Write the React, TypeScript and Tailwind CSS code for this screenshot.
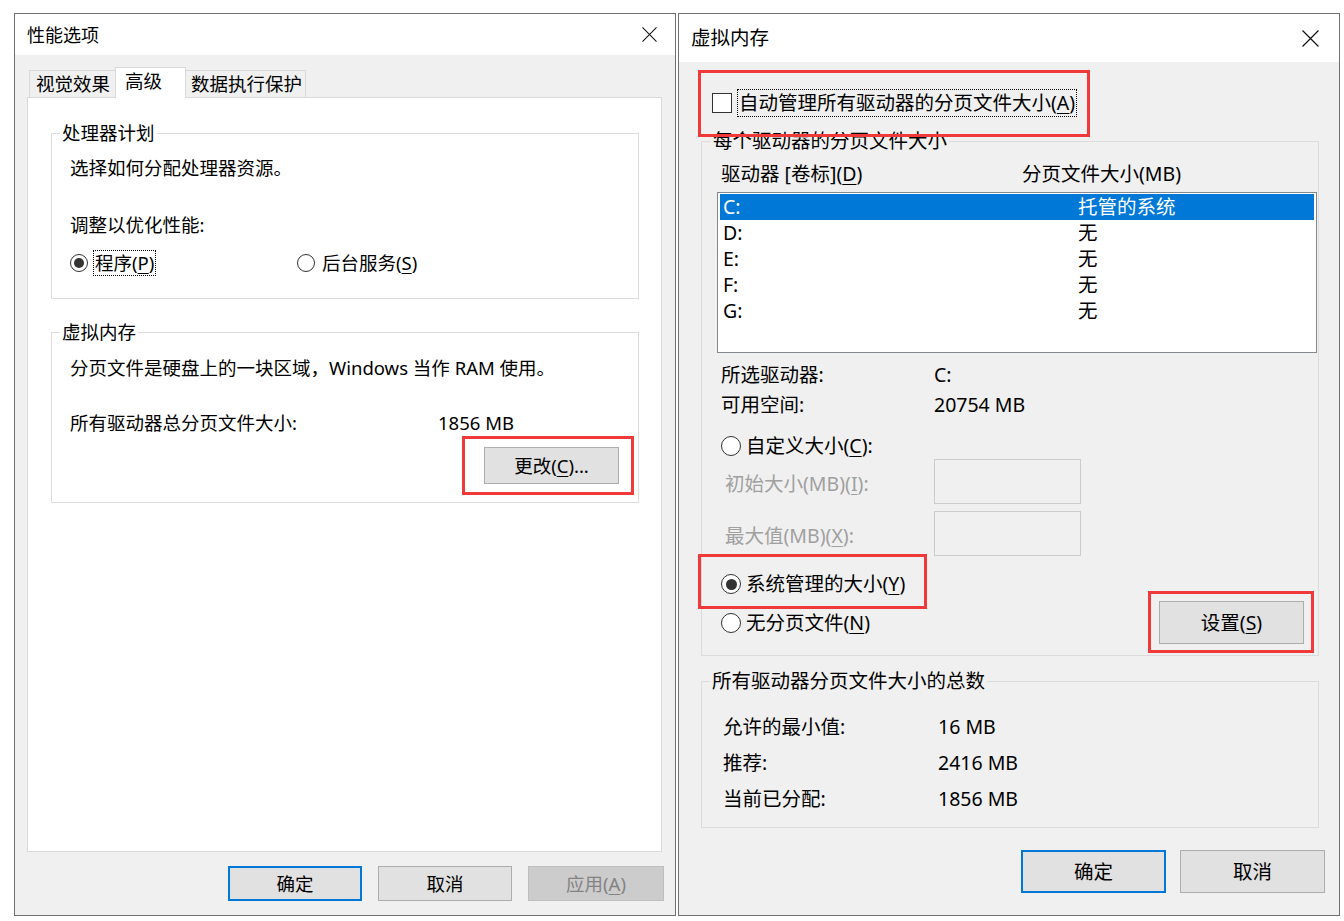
import type { ReactNode } from "react";

type Drive = { letter: string; size: string };

const DRIVES: Drive[] = [
  { letter: "C:", size: "托管的系统" },
  { letter: "D:", size: "无" },
  { letter: "E:", size: "无" },
  { letter: "F:", size: "无" },
  { letter: "G:", size: "无" },
];

// access-key letter, underlined like the Win32 mnemonic
function Mn({ children }: { children: ReactNode }) {
  return (
    <span className="underline decoration-[1px] underline-offset-[3px]">
      {children}
    </span>
  );
}

function CloseGlyph({ size }: { size: number }) {
  return (
    <svg
      width={size}
      height={size}
      viewBox="0 0 16 16"
      fill="none"
      stroke="#111111"
      strokeWidth={1.1}
    >
      <path d="M0.5 0.5L15.5 15.5M15.5 0.5L0.5 15.5" />
    </svg>
  );
}

function Radio({ checked = false, big = false }: { checked?: boolean; big?: boolean }) {
  return (
    <span
      className={`flex shrink-0 items-center justify-center rounded-full border border-[#333333] bg-white ${
        big ? "h-[20px] w-[20px]" : "h-[18px] w-[18px]"
      }`}
    >
      {checked && (
        <span
          className={`block rounded-full bg-[#333333] ${
            big ? "h-[11px] w-[11px]" : "h-[10px] w-[10px]"
          }`}
        />
      )}
    </span>
  );
}

// red annotation frame drawn over a control
function Highlight({ className }: { className: string }) {
  return (
    <span
      className={`pointer-events-none absolute z-10 border-[3px] border-[#f03a3a] ${className}`}
    />
  );
}

function WinButton({
  children,
  primary = false,
  disabled = false,
  className = "",
}: {
  children: ReactNode;
  primary?: boolean;
  disabled?: boolean;
  className?: string;
}) {
  const tone = disabled
    ? "border border-[#bfbfbf] bg-[#cccccc] text-[#838383]"
    : primary
      ? "border-2 border-[#0078d7] bg-[#e1e1e1]"
      : "border border-[#adadad] bg-[#e1e1e1]";
  return (
    <button type="button" className={`flex items-center justify-center ${tone} ${className}`}>
      {children}
    </button>
  );
}

function PerformanceOptions() {
  return (
    <section className="flex h-[903px] w-[662px] shrink-0 flex-col border border-[#707070] bg-[#f0f0f0] text-[18.5px] leading-[26px]">
      <header className="flex h-[41px] shrink-0 items-center justify-between bg-white pl-[12px] pr-[18px]">
        <span className="text-[18px]">性能选项</span>
        <CloseGlyph size={15} />
      </header>

      <div className="flex flex-1 flex-col pl-[12px] pr-[11px] pt-[12px]">
        {/* tab strip */}
        <div className="flex h-[30px] items-end pl-[2px]">
          <div className="flex h-[27px] w-[86px] items-center border border-b-0 border-r-0 border-[#d9d9d9] pl-[6px]">
            视觉效果
          </div>
          <div className="relative z-10 -mb-px flex h-[31px] w-[71px] items-center border border-b-0 border-[#d9d9d9] bg-white pb-[5px] pl-[9px]">
            高级
          </div>
          <div className="flex h-[27px] w-[120px] items-center border border-b-0 border-l-0 border-[#d9d9d9] pl-[5px]">
            数据执行保护
          </div>
        </div>

        <div className="mr-[2px] flex h-[755px] flex-col border border-[#d9d9d9] bg-white pl-[23px] pr-[22px] pt-[23px]">
          <fieldset className="border border-[#dcdcdc]">
            <legend className="ml-[8px] px-[2px] leading-[24px]">处理器计划</legend>
            <div className="flex flex-col pb-[22px] pl-[18px]">
              <div className="mt-[10px] h-[26px]">选择如何分配处理器资源。</div>
              <div className="mt-[31px] h-[26px]">调整以优化性能:</div>
              <div className="mt-[12px] flex h-[26px] items-center">
                <div className="flex w-[227px] items-center">
                  <Radio checked />
                  <span className="ml-[5px] flex h-[26px] items-center border border-dotted border-black px-[1px]">
                    程序(<Mn>P</Mn>)
                  </span>
                </div>
                <Radio />
                <span className="ml-[7px]">
                  后台服务(<Mn>S</Mn>)
                </span>
              </div>
            </div>
          </fieldset>

          <fieldset className="mt-[21px] border border-[#dcdcdc]">
            <legend className="ml-[8px] px-[2px] leading-[24px]">虚拟内存</legend>
            <div className="flex flex-col pb-[18px] pl-[18px]">
              <div className="mt-[11px] h-[26px]">
                分页文件是硬盘上的一块区域，Windows 当作 RAM 使用。
              </div>
              <div className="mt-[29px] flex h-[26px]">
                <span className="w-[368px]">所有驱动器总分页文件大小:</span>
                <span>1856 MB</span>
              </div>
              <div className="relative mr-[19px] mt-[11px] self-end">
                <WinButton className="h-[37px] w-[135px]">
                  更改(<Mn>C</Mn>)...
                </WinButton>
                <Highlight className="-bottom-[11px] -left-[22px] -right-[15px] -top-[11px]" />
              </div>
            </div>
          </fieldset>
        </div>

        <div className="mt-[14px] flex justify-end gap-[16px]">
          <WinButton primary className="h-[35px] w-[134px]">
            确定
          </WinButton>
          <WinButton className="h-[35px] w-[134px]">取消</WinButton>
          <WinButton disabled className="h-[35px] w-[136px]">
            应用(<Mn>A</Mn>)
          </WinButton>
        </div>
      </div>
    </section>
  );
}

function VirtualMemory() {
  return (
    <section className="flex h-[903px] w-[662px] shrink-0 flex-col border border-[#707070] bg-[#f0f0f0] text-[19.5px] leading-[26px]">
      <header className="flex h-[48px] shrink-0 items-center justify-between bg-white pl-[12px] pr-[20px]">
        <span>虚拟内存</span>
        <CloseGlyph size={17} />
      </header>

      <div className="flex flex-1 flex-col">
        <div className="relative ml-[33px] mt-[27px] flex h-[28px] w-fit items-center">
          <span className="h-[20px] w-[20px] border border-[#333333] bg-white" />
          <span className="ml-[5px] flex h-[28px] items-center border border-dotted border-black px-[1px]">
            自动管理所有驱动器的分页文件大小(<Mn>A</Mn>)
          </span>
          <Highlight className="-bottom-[20px] -left-[14px] -right-[13px] -top-[19px]" />
        </div>

        <fieldset className="ml-[22px] mr-[20px] mt-[12px] border border-[#dcdcdc]">
          <legend className="ml-[9px] px-[2px] leading-[24px]">每个驱动器的分页文件大小</legend>
          <div className="flex flex-col pb-[11px]">
            <div className="mt-[8px] flex h-[26px] items-center pl-[19px]">
              <span className="w-[301px]">
                驱动器 [卷标](<Mn>D</Mn>)
              </span>
              <span>分页文件大小(MB)</span>
            </div>

            <div className="ml-[15px] mt-[5px] h-[161px] w-[600px] border border-[#828790] bg-white px-[2px] pt-[1px]">
              {DRIVES.map((d, i) => (
                <div
                  key={d.letter}
                  className={`flex h-[26px] items-center pl-[3px] ${
                    i === 0 ? "bg-[#0078d7] text-white" : ""
                  }`}
                >
                  <span className="w-[355px]">{d.letter}</span>
                  <span>{d.size}</span>
                </div>
              ))}
            </div>

            <div className="mt-[9px] flex h-[26px] items-center pl-[19px]">
              <span className="w-[213px]">所选驱动器:</span>
              <span>C:</span>
            </div>
            <div className="mt-[4px] flex h-[26px] items-center pl-[19px]">
              <span className="w-[213px]">可用空间:</span>
              <span>20754 MB</span>
            </div>

            <div className="mt-[15px] flex h-[26px] items-center pl-[19px]">
              <Radio big />
              <span className="ml-[5px]">
                自定义大小(<Mn>C</Mn>):
              </span>
            </div>
            <div className="flex h-[45px] items-center pl-[23px] text-[#a0a0a0]">
              <span className="w-[209px] pt-[4px]">
                初始大小(MB)(<Mn>I</Mn>):
              </span>
              <span className="h-[45px] w-[147px] border border-[#cccccc]" />
            </div>
            <div className="mt-[7px] flex h-[45px] items-center pl-[23px] text-[#a0a0a0]">
              <span className="w-[209px] pt-[4px]">
                最大值(MB)(<Mn>X</Mn>):
              </span>
              <span className="h-[45px] w-[147px] border border-[#cccccc]" />
            </div>

            <div className="relative ml-[19px] mt-[15px] flex h-[26px] w-[186px] items-center">
              <Radio checked big />
              <span className="ml-[5px]">
                系统管理的大小(<Mn>Y</Mn>)
              </span>
              <Highlight className="-bottom-[12px] -left-[23px] -right-[20px] -top-[17px]" />
            </div>

            <div className="mt-[4px] flex h-[43px] items-center justify-between pl-[19px] pr-[14px]">
              <div className="flex items-center">
                <Radio big />
                <span className="ml-[5px]">
                  无分页文件(<Mn>N</Mn>)
                </span>
              </div>
              <div className="relative">
                <WinButton className="h-[43px] w-[145px]">
                  设置(<Mn>S</Mn>)
                </WinButton>
                <Highlight className="-bottom-[9px] -left-[11px] -right-[10px] -top-[10px]" />
              </div>
            </div>
          </div>
        </fieldset>

        <fieldset className="ml-[22px] mr-[20px] mt-[13px] border border-[#dcdcdc]">
          <legend className="ml-[8px] px-[2px] leading-[24px]">所有驱动器分页文件大小的总数</legend>
          <div className="flex flex-col pb-[15px] pl-[21px]">
            <div className="mt-[21px] flex h-[26px] items-center">
              <span className="w-[215px]">允许的最小值:</span>
              <span>16 MB</span>
            </div>
            <div className="mt-[10px] flex h-[26px] items-center">
              <span className="w-[215px]">推荐:</span>
              <span>2416 MB</span>
            </div>
            <div className="mt-[10px] flex h-[26px] items-center">
              <span className="w-[215px]">当前已分配:</span>
              <span>1856 MB</span>
            </div>
          </div>
        </fieldset>

        <div className="mt-[22px] flex justify-end gap-[14px] pr-[14px]">
          <WinButton primary className="h-[43px] w-[145px]">
            确定
          </WinButton>
          <WinButton className="h-[43px] w-[145px]">取消</WinButton>
        </div>
      </div>
    </section>
  );
}

export default function App() {
  return (
    <div className="flex h-[921px] w-[1344px] gap-[2px] bg-white pl-[14px] pt-[13px] font-['Noto_Sans','Noto_Sans_CJK_SC',sans-serif] text-black">
      <PerformanceOptions />
      <VirtualMemory />
    </div>
  );
}
